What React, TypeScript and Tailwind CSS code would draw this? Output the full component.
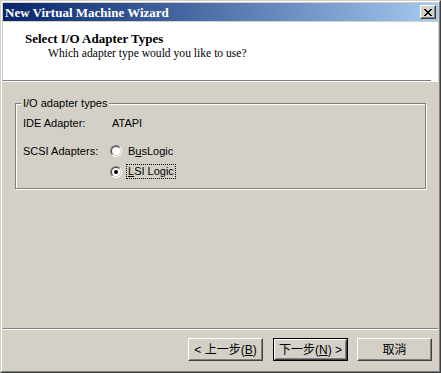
import React from "react";

const serif = "font-['Liberation_Serif','Noto_Sans_CJK_TC',serif]";
const sans = "font-['Liberation_Sans','Noto_Sans_CJK_TC',sans-serif]";

const Radio = ({ checked }: { checked?: boolean }) => (
  <span className="w-[12px] h-[12px] rounded-full border border-t-[#808080] border-l-[#808080] border-r-white border-b-white flex shrink-0">
    <span className="w-full h-full rounded-full border border-t-[#404040] border-l-[#404040] border-r-[#d4d0c8] border-b-[#d4d0c8] bg-white flex items-center justify-center">
      {checked && <span className="w-[4px] h-[4px] rounded-full bg-black" />}
    </span>
  </span>
);

const WinButton = ({
  children,
  isDefault,
  className,
}: {
  children: React.ReactNode;
  isDefault?: boolean;
  className?: string;
}) => (
  <div
    className={`w-[75px] h-[23px] ${
      isDefault ? "border border-black" : ""
    } ${className || ""}`}
  >
    <div className="w-full h-full border border-t-white border-l-white border-r-[#404040] border-b-[#404040]">
      <div className="w-full h-full border border-t-[#d4d0c8] border-l-[#d4d0c8] border-r-[#808080] border-b-[#808080] bg-[#d4d0c8] flex items-center justify-center text-[12px] text-black leading-none">
        {children}
      </div>
    </div>
  </div>
);

export default function App() {
  return (
    <div className="w-[441px] h-[373px] border border-t-[#d4d0c8] border-l-[#d4d0c8] border-r-[#404040] border-b-[#404040] bg-[#d4d0c8]">
      <div className="w-full h-full border border-t-white border-l-white border-r-[#808080] border-b-[#808080] p-px flex flex-col">
        {/* title bar */}
        <div className="h-[18px] flex items-center bg-gradient-to-r from-[#0a246a] to-[#a6caf0] pl-[2px] pr-[2px] shrink-0">
          <span className={`${serif} text-white font-bold text-[13px] leading-none`}>
            New Virtual Machine Wizard
          </span>
          <div className="ml-auto w-[16px] h-[14px] border border-t-white border-l-white border-r-[#404040] border-b-[#404040]">
            <div className="w-full h-full border border-t-[#d4d0c8] border-l-[#d4d0c8] border-r-[#808080] border-b-[#808080] bg-[#d4d0c8] flex items-center justify-center">
              <svg width="8" height="7" viewBox="0 0 8 7" shapeRendering="crispEdges">
                <path d="M0 0h2v1H0zM6 0h2v1H6zM1 1h2v1H1zM5 1h2v1H5zM2 2h4v1H2zM3 3h2v1H3zM2 4h4v1H2zM1 5h2v1H1zM5 5h2v1H5zM0 6h2v1H0zM6 6h2v1H6z" fill="#000" />
              </svg>
            </div>
          </div>
        </div>

        {/* header */}
        <div className="mt-px bg-white h-[58px] shrink-0 pl-[22px] pt-[10px]">
          <div className={`${serif} font-bold text-[13px] leading-[14px] text-black`}>
            Select I/O Adapter Types
          </div>
          <div className={`${serif} text-[11.6px] leading-[14px] text-black pl-[23px] mt-px`}>
            Which adapter type would you like to use?
          </div>
        </div>
        <div className="h-[2px] bg-white shrink-0">
          <div className="w-[428px] h-px bg-[#808080]" />
        </div>

        {/* body */}
        <div className={`flex-1 ${sans} text-[11px] text-black`}>
          <div className="mt-[21px] ml-[12px] w-[411px] h-[86px] border border-[#808080] shadow-[inset_1px_1px_0_#fff,1px_1px_0_#fff] relative pl-[7px] pt-[12px]">
            <span className="absolute -top-[7px] left-[5px] bg-[#d4d0c8] px-[2px] leading-[13px]">
              I/O adapter types
            </span>
            <div className="flex items-center h-[14px]">
              <span className="w-[89px]">IDE Adapter:</span>
              <span>ATAPI</span>
            </div>
            <div className="flex items-center h-[14px] mt-[14px]">
              <span className="w-[87px]">SCSI Adapters:</span>
              <Radio />
              <span className="ml-[6px]">
                B<span className="underline">u</span>sLogic
              </span>
            </div>
            <div className="flex items-center h-[15px] mt-[6px]">
              <span className="w-[87px]" />
              <Radio checked />
              <span className="ml-[4px] h-[15px] px-px flex items-center border border-dotted border-black">
                <span className="underline">L</span>SI Logic
              </span>
            </div>
          </div>
        </div>

        {/* footer */}
        <div className="h-[2px] shrink-0 border-t border-t-[#808080] border-b border-b-white" />
        <div className={`h-[40px] shrink-0 flex items-start pt-[8px] pr-[6px] ${sans}`}>
          <WinButton className="ml-auto">
            &lt; 上一步(<span className="underline">B</span>)
          </WinButton>
          <WinButton isDefault className="ml-[10px]">
            下一步(<span className="underline">N</span>) &gt;
          </WinButton>
          <WinButton className="ml-[9px]">取消</WinButton>
        </div>
      </div>
    </div>
  );
}
